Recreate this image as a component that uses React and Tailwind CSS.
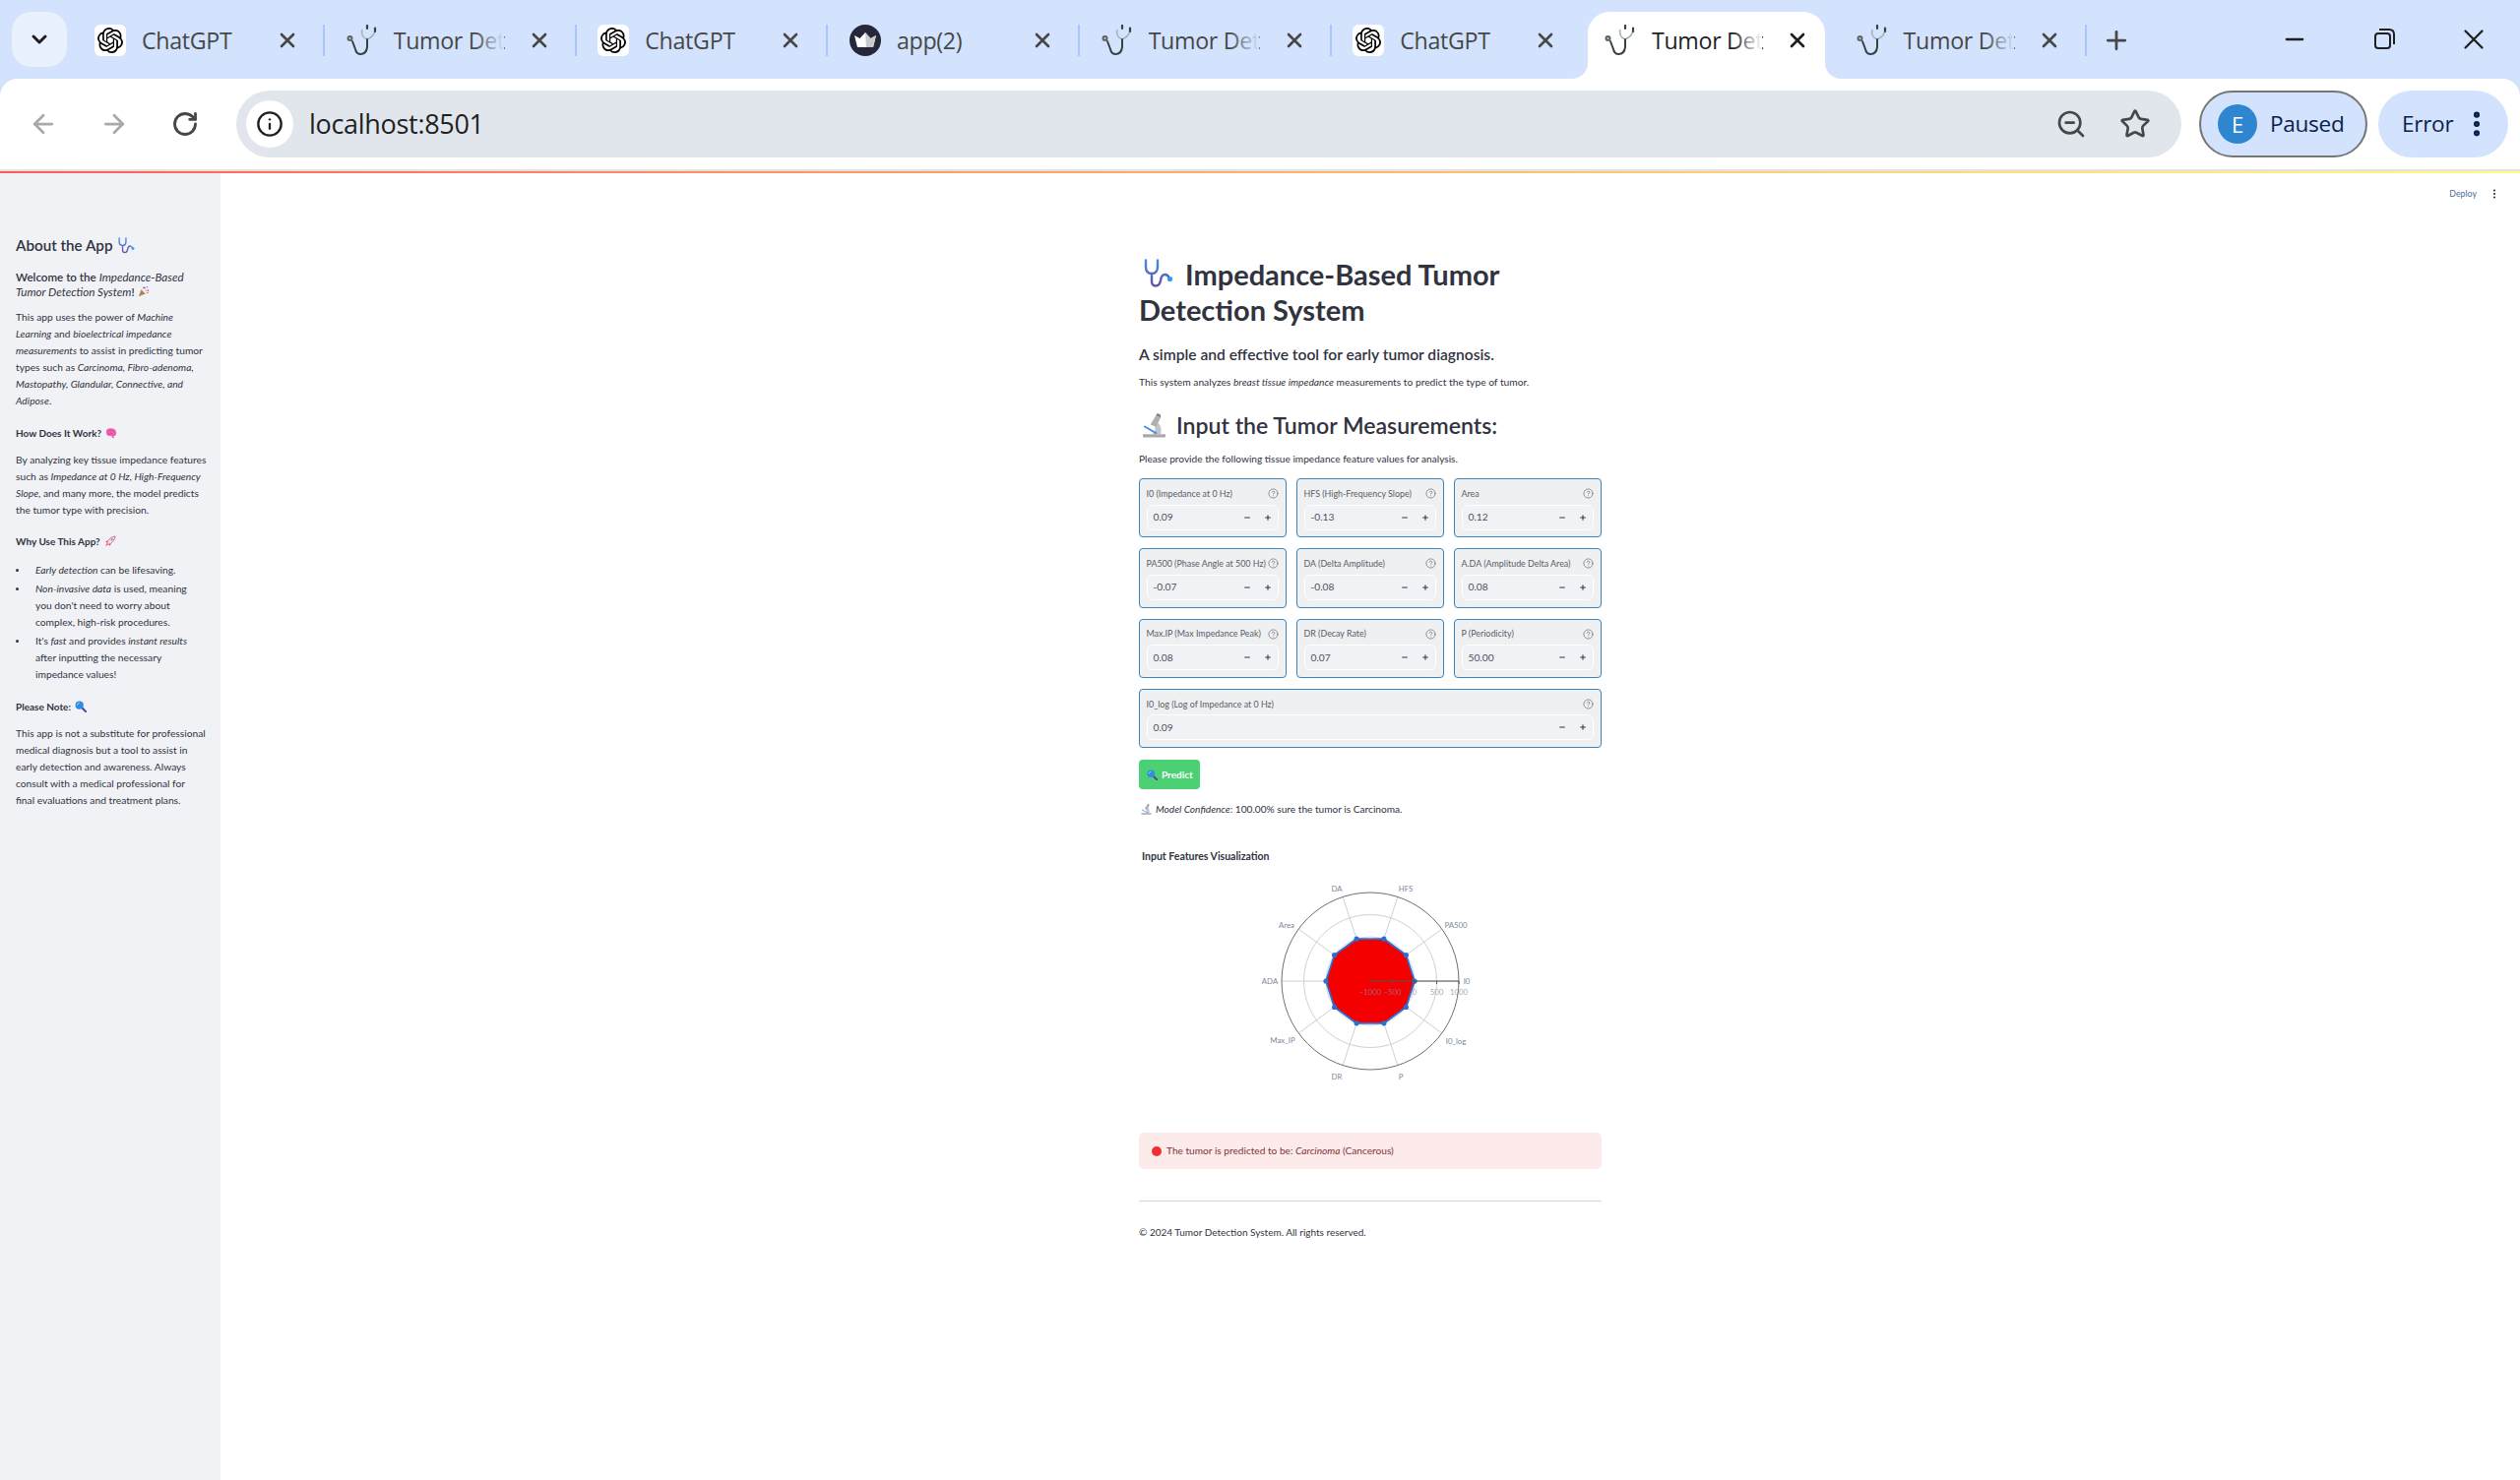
import { ArrowLeft, ArrowRight, ChevronDown, CircleHelp, EllipsisVertical, Info, Minus, Plus, RotateCw, Star, X, ZoomOut } from "lucide-react";
import { SiOpenai } from "react-icons/si";

const Stethoscope = ({ className }) => (
  <svg viewBox="0 0 30 30" className={className} fill="none">
    <defs>
      <linearGradient id="steth" x1="0" y1="0" x2="0" y2="1">
        <stop offset="0" stopColor="#3b8fe8" />
        <stop offset="1" stopColor="#6a4fa3" />
      </linearGradient>
    </defs>
    <path d="M2 1.5V8Q2 15 8 15Q14 15 14 8V1.5M8 15V23Q8 27.5 12 27.5Q16 27.5 17 22Q18 15.5 22 16Q25 16.5 26 20.5" stroke="url(#steth)" strokeWidth="2.4" strokeLinecap="round" />
    <circle cx="26.5" cy="20.5" r="2.6" fill="#2f9bf0" />
  </svg>
);

const Microscope = ({ className }) => (
  <svg viewBox="0 0 26 26" className={className} fill="none">
    <rect x="1" y="22" width="24" height="3.5" rx="0.8" fill="#a9a9ad" />
    <path d="M15 9Q22 12 20 22H11Q16 18 13 13Z" fill="#c4c4c8" />
    <path d="M9 12L15 2L20 4.5L15 14Z" fill="#b0b0b4" />
    <path d="M15 2L16.5 0L19.5 1.5L20 4.5Z" fill="#77777b" />
    <path d="M3 14L15 21" stroke="#4a90e8" strokeWidth="2" strokeLinecap="round" />
  </svg>
);

const Magnifier = ({ className }) => (
  <svg viewBox="0 0 14 14" className={className} fill="none">
    <path d="M8.5 8.5L13 13" stroke="#5b3f8f" strokeWidth="2.4" strokeLinecap="round" />
    <circle cx="5.5" cy="5.5" r="4.8" fill="#2f8de4" />
    <path d="M2.8 5Q3.2 3 5 2.8" stroke="#bfe0fb" strokeWidth="1" strokeLinecap="round" />
  </svg>
);

const Party = ({ className }) => (
  <svg viewBox="0 0 14 14" className={className}>
    <path d="M1 13L4 5L9 10Z" fill="#b5824a" />
    <circle cx="8" cy="3" r="1.1" fill="#8e5bd0" />
    <circle cx="11" cy="2" r="0.9" fill="#3b9be8" />
    <circle cx="12" cy="6" r="1" fill="#e84fa0" />
    <circle cx="9.5" cy="6.5" r="0.9" fill="#f2c230" />
    <path d="M6 4L7 1.5M10 9L13 8.5" stroke="#e84fa0" strokeWidth="0.9" />
  </svg>
);

const Brain = ({ className }) => (
  <svg viewBox="0 0 14 14" className={className}>
    <path d="M1 6Q1 1.5 6 1.5Q12 1 13 6Q13.5 10 10 10.5L10.5 13L8 12.5L7.5 10.5Q1 11 1 6Z" fill="#f25fb0" />
    <path d="M3.5 5Q6 3 7 5.5M7 4Q9.5 3 10.5 6M4 8Q7 6.5 9 8.5" stroke="#c93a8c" strokeWidth="0.7" fill="none" />
  </svg>
);

const Rocket = ({ className }) => (
  <svg viewBox="0 0 14 14" className={className}>
    <path d="M3 11L4 6.5Q7.5 1.5 13 1Q12.5 6.5 7.5 10Z" fill="#f0dde4" stroke="#e0457a" strokeWidth="0.8" />
    <path d="M1 13L3 9.5L4.5 11Z" fill="#f2703c" />
    <circle cx="9" cy="5" r="1.2" fill="#3b9be8" />
    <path d="M4 6.5L1.5 7L3 9M7.5 10L7 12.5L5 11" fill="#e0457a" />
  </svg>
);

const TabStethoscope = () => (
  <svg viewBox="12 8 32 32" className="h-[32px] w-[32px]" fill="none">
    <path d="M28 13Q26 20 33 23Q40 20 41 14" stroke="#a9b3b7" strokeWidth="1.6" />
    <path d="M33 23V31Q32 38 26.5 38Q22 38 21 33L18 25" stroke="#3a4145" strokeWidth="2" strokeLinecap="round" />
    <circle cx="15.5" cy="22" r="3" fill="#5c6468" />
    <circle cx="15.5" cy="22" r="1" fill="#c9ced0" />
    <path d="M33 9V12M41 11.5V15" stroke="#3a4145" strokeWidth="2.2" strokeLinecap="round" />
  </svg>
);

const TabIcon = ({ kind }) => {
  if (kind === "gpt")
    return (
      <span className="flex h-[32px] w-[32px] items-center justify-center rounded-[6px] bg-white text-black">
        <SiOpenai size={26} />
      </span>
    );
  if (kind === "app")
    return (
      <svg viewBox="0 0 32 32" className="h-[32px] w-[32px]">
        <circle cx="16" cy="16" r="16" fill="#262738" />
        <path d="M5 11L10.5 14L16 8L21.5 14L27 11L24 23H8Z" fill="#fff" />
        <path d="M16 8L21.5 14L27 11L24 23H17Z" fill="#c9c9cf" />
      </svg>
    );
  return <TabStethoscope />;
};

const tabs = [
  { kind: "gpt", title: "ChatGPT", sep: true },
  { kind: "med", title: "Tumor Det", sep: true, fade: true },
  { kind: "gpt", title: "ChatGPT", sep: true },
  { kind: "app", title: "app(2)", sep: true },
  { kind: "med", title: "Tumor Det", sep: true, fade: true },
  { kind: "gpt", title: "ChatGPT", sep: false },
  { kind: "med", title: "Tumor Det", sep: false, active: true, fade: true },
  { kind: "med", title: "Tumor Det", sep: true, fade: true },
];

const Tab = ({ kind, title, sep, active, fade }) => (
  <div className="relative flex h-[68px] w-[255.67px] shrink-0 items-center pb-[10px] pl-[20px]">
    {active && (
      <div className="absolute inset-y-0 left-[3px] w-[241px] rounded-t-[22px] bg-white">
        <div className="absolute bottom-0 -left-[16px] h-[16px] w-[16px] bg-white">
          <div className="h-full w-full rounded-br-[16px] bg-[#d3e3fd]" />
        </div>
        <div className="absolute -right-[16px] bottom-0 h-[16px] w-[16px] bg-white">
          <div className="h-full w-full rounded-bl-[16px] bg-[#d3e3fd]" />
        </div>
      </div>
    )}
    <div className="relative shrink-0">
      <TabIcon kind={kind} />
    </div>
    <div className={`relative ml-[16px] w-[112px] shrink-0 whitespace-nowrap text-[23.2px] leading-[32px] tracking-[-0.3px] ${active ? "text-[#1f1f1f]" : "text-[#474747]"}`}>
      {title}
      {fade && <div className={`absolute inset-y-0 right-0 w-[30px] bg-linear-to-r from-transparent ${active ? "to-white" : "to-[#d3e3fd]"}`} />}
    </div>
    <X className={`relative ml-[24px] shrink-0 ${active ? "text-[#1f1f1f]" : "text-[#474747]"}`} size={24} strokeWidth={2.6} />
    {sep && <div className="ml-[24px] h-[32px] w-[2px] shrink-0 bg-[#a8c7fa]" />}
  </div>
);

const BrowserChrome = () => (
  <div className="shrink-0 bg-[#d3e3fd] font-['Open_Sans',sans-serif]">
    <div className="flex h-[80px] items-start">
      <div className="mt-[12px] ml-[12px] flex h-[56px] w-[56px] items-center justify-center rounded-[20px] bg-[#e9f0fe]">
        <ChevronDown size={24} strokeWidth={3} className="text-[#1f1f1f]" />
      </div>
      <div className="ml-[8px] mt-[12px] flex">
        {tabs.map((t, i) => (
          <Tab key={i} {...t} />
        ))}
      </div>
      <Plus size={30} strokeWidth={2.2} className="mt-[26px] ml-[14px] text-[#474747]" />
      <div className="ml-auto flex h-[80px] items-start pt-[26px]">
        <div className="flex w-[92px] justify-center">
          <Minus size={28} strokeWidth={2} className="text-[#1f1f1f]" />
        </div>
        <div className="flex w-[88px] justify-center">
          <svg viewBox="0 0 28 28" className="h-[28px] w-[28px]" fill="none" stroke="#1f1f1f" strokeWidth="2">
            <rect x="6" y="8" width="15" height="15" rx="3" />
            <path d="M10 4H20Q25 4 25 9V19" />
          </svg>
        </div>
        <div className="flex w-[95px] justify-center">
          <X size={34} strokeWidth={1.6} className="-mt-[3px] text-[#1f1f1f]" />
        </div>
      </div>
    </div>
    <div className="flex h-[92px] items-center rounded-t-[18px] bg-white pl-[8px] pr-[12px]">
      <div className="flex w-[72px] justify-center">
        <ArrowLeft size={30} strokeWidth={2.2} className="text-[#a9a9a9]" />
      </div>
      <div className="flex w-[72px] justify-center">
        <ArrowRight size={30} strokeWidth={2.2} className="text-[#a9a9a9]" />
      </div>
      <div className="flex w-[72px] justify-center">
        <RotateCw size={28} strokeWidth={2.4} className="text-[#474747]" />
      </div>
      <div className="ml-[16px] flex h-[68px] flex-1 items-center rounded-full bg-[#e1e6ed] pl-[10px] pr-[31px]">
        <div className="flex h-[48px] w-[48px] items-center justify-center rounded-full bg-white">
          <Info size={28} strokeWidth={2} className="text-[#1f1f1f]" />
        </div>
        <span className="ml-[16px] text-[27px] leading-[36px] tracking-[-0.3px] text-[#1f1f1f]">localhost:8501</span>
        <ZoomOut size={32} strokeWidth={2} className="ml-auto text-[#474747]" />
        <Star size={32} strokeWidth={2} className="ml-[33px] text-[#474747]" />
      </div>
      <div className="ml-[18px] flex h-[68px] w-[171px] items-center rounded-full border-[2.5px] border-[#747775] bg-[#d3e3fd] pl-[17px]">
        <span className="flex h-[40px] w-[40px] items-center justify-center rounded-full bg-[#2e86d0] text-[22px] text-white">E</span>
        <span className="ml-[13px] text-[22.6px] tracking-[-0.3px] text-[#0b1f4c]">Paused</span>
      </div>
      <div className="ml-[11px] flex h-[68px] w-[132px] items-center rounded-full bg-[#d3e3fd] pl-[24px]">
        <span className="text-[22.6px] tracking-[-0.3px] text-[#0b1f4c]">Error</span>
        <EllipsisVertical size={32} strokeWidth={2.6} className="ml-[8px] text-[#0b1f4c]" />
      </div>
    </div>
    <div className="h-[2px] bg-[#e2e2e2]" />
    <div className="h-[2px] bg-linear-to-r from-[#ff5a5a] to-[#fffd80]" />
  </div>
);

const Sidebar = () => (
  <aside className="w-[224px] shrink-0 bg-[#f0f2f6] pl-[16px] pt-[63px] text-[10.25px] leading-[17px] text-[#31333f]">
    <h2 className="flex h-[20px] items-center text-[15.2px] font-semibold leading-[20px]">
      About the App
      <Stethoscope className="ml-[6px] h-[17px] w-[17px]" />
    </h2>
    <p className="mt-[15px] whitespace-nowrap text-[11.6px] font-semibold leading-[15px]">
      Welcome to the <em className="font-normal">Impedance-Based</em>
      <br />
      <em className="font-normal">Tumor Detection System</em>! <Party className="inline h-[12px] w-[12px] align-[-1px]" />
    </p>
    <p className="mt-[10px] whitespace-nowrap">
      This app uses the power of <em>Machine</em>
      <br />
      <em>Learning</em> and <em>bioelectrical impedance</em>
      <br />
      <em>measurements</em> to assist in predicting tumor
      <br />
      types such as <em>Carcinoma, Fibro-adenoma,</em>
      <br />
      <em>Mastopathy, Glandular, Connective, and</em>
      <br />
      <em>Adipose</em>.
    </p>
    <h3 className="mt-[16px] flex h-[16px] items-center text-[10px] font-bold leading-[16px]">
      How Does It Work?
      <Brain className="ml-[4px] h-[12px] w-[12px]" />
    </h3>
    <p className="mt-[11px] whitespace-nowrap">
      By analyzing key tissue impedance features
      <br />
      such as <em>Impedance at 0 Hz, High-Frequency</em>
      <br />
      <em>Slope</em>, and many more, the model predicts
      <br />
      the tumor type with precision.
    </p>
    <h3 className="mt-[15px] flex h-[16px] items-center text-[10px] font-bold leading-[16px]">
      Why Use This App?
      <Rocket className="ml-[4px] h-[12px] w-[12px]" />
    </h3>
    <ul className="mt-[13px] flex list-none flex-col gap-[2px] whitespace-nowrap">
      <li className="flex">
        <span className="mr-[17px] mt-[7px] h-[3px] w-[3px] shrink-0 rounded-full bg-[#31333f]" />
        <span>
          <em>Early detection</em> can be lifesaving.
        </span>
      </li>
      <li className="flex">
        <span className="mr-[17px] mt-[7px] h-[3px] w-[3px] shrink-0 rounded-full bg-[#31333f]" />
        <span>
          <em>Non-invasive data</em> is used, meaning
          <br />
          you don't need to worry about
          <br />
          complex, high-risk procedures.
        </span>
      </li>
      <li className="flex">
        <span className="mr-[17px] mt-[7px] h-[3px] w-[3px] shrink-0 rounded-full bg-[#31333f]" />
        <span>
          It's <em>fast</em> and provides <em>instant results</em>
          <br />
          after inputting the necessary
          <br />
          impedance values!
        </span>
      </li>
    </ul>
    <h3 className="mt-[16px] flex h-[16px] items-center text-[10px] font-bold leading-[16px]">
      Please Note:
      <Magnifier className="ml-[4px] h-[12px] w-[12px]" />
    </h3>
    <p className="mt-[11px] whitespace-nowrap">
      This app is not a substitute for professional
      <br />
      medical diagnosis but a tool to assist in
      <br />
      early detection and awareness. Always
      <br />
      consult with a medical professional for
      <br />
      final evaluations and treatment plans.
    </p>
  </aside>
);

const fields = [
  { label: "I0 (Impedance at 0 Hz)", value: "0.09" },
  { label: "HFS (High-Frequency Slope)", value: "-0.13" },
  { label: "Area", value: "0.12" },
  { label: "PA500 (Phase Angle at 500 Hz)", value: "-0.07" },
  { label: "DA (Delta Amplitude)", value: "-0.08" },
  { label: "A.DA (Amplitude Delta Area)", value: "0.08" },
  { label: "Max.IP (Max Impedance Peak)", value: "0.08" },
  { label: "DR (Decay Rate)", value: "0.07" },
  { label: "P (Periodicity)", value: "50.00" },
  { label: "I0_log (Log of Impedance at 0 Hz)", value: "0.09", wide: true },
];

const NumberField = ({ label, value, wide }) => (
  <div className={`h-[60.33px] rounded-[4px] border-[1.5px] border-[#3a84c0] bg-[#eef0f2] pl-[6.5px] pr-[7px] pt-[6.5px] ${wide ? "col-span-3" : ""}`}>
    <div className="flex h-[16px] items-center justify-between">
      <span className="whitespace-nowrap text-[8.9px] text-[#5a5c68]">{label}</span>
      <CircleHelp size={11} strokeWidth={1.6} className="shrink-0 text-[#6f6f76]" />
    </div>
    <div className="mt-[3px] flex h-[26px] items-center rounded-[6px] border border-white bg-[#f0f2f6] pl-[6px]">
      <span className="text-[10.2px] text-[#4f515c]">{value}</span>
      <span className="ml-auto flex w-[21px] justify-center">
        <Minus size={8} strokeWidth={3.2} className="text-[#31333f]" />
      </span>
      <span className="flex w-[21px] justify-center">
        <Plus size={8} strokeWidth={3.2} className="text-[#31333f]" />
      </span>
    </div>
  </div>
);

const axes = [
  { name: "I0", x: 98, y: 0 },
  { name: "PA500", x: 87, y: -57 },
  { name: "HFS", x: 36, y: -94 },
  { name: "DA", x: -34, y: -94 },
  { name: "Area", x: -85, y: -57 },
  { name: "ADA", x: -102, y: 0 },
  { name: "Max_IP", x: -89, y: 60 },
  { name: "DR", x: -34, y: 97 },
  { name: "P", x: 31, y: 97 },
  { name: "I0_log", x: 87, y: 61 },
];

const polar = (r, i) => {
  const a = (i * 36 * Math.PI) / 180;
  return [r * Math.cos(a), -r * Math.sin(a)];
};

const RadarChart = () => {
  const pts = axes.map((_, i) => polar(45, i));
  const poly = pts.map((p) => p.join(",")).join(" ");
  return (
    <svg viewBox="0 0 470 240" className="h-[240px] w-[470px]">
      <g transform="translate(235 119)" fontFamily="Lato, sans-serif" fontSize="7.8">
        {axes.map((a, i) => {
          const [x, y] = polar(90, i);
          return <line key={a.name} x1="0" y1="0" x2={x} y2={y} stroke="#cfcfcf" strokeWidth="1" />;
        })}
        <circle r="22.5" fill="none" stroke="#d5d5d5" />
        <circle r="45" fill="none" stroke="#d5d5d5" />
        <circle r="67.5" fill="none" stroke="#d0d0d0" />
        <circle r="90" fill="none" stroke="#6f6f6f" />
        <polygon points={poly} fill="#f50000" stroke="#2a6fd0" strokeWidth="1.8" />
        {pts.map((p, i) => (
          <circle key={i} cx={p[0]} cy={p[1]} r="2.6" fill="#2a6fd0" />
        ))}
        <line x1="0" y1="0" x2="90" y2="0" stroke="#555" strokeWidth="1" />
        {[0, 22.5, 45, 67.5, 90].map((x) => (
          <line key={x} x1={x} y1="0" x2={x} y2="3" stroke="#555" />
        ))}
        {[
          ["−1000", 0],
          ["−500", 22.5],
          ["0", 45],
          ["500", 67.5],
          ["1000", 90],
        ].map(([t, x]) => (
          <text key={t} x={x} y="14" textAnchor="middle" fill="#7d87a0" fillOpacity="0.75">
            {t}
          </text>
        ))}
        {axes.map((a) => (
          <text key={a.name} x={a.x} y={a.y + 3} textAnchor="middle" fill="#7d87a0">
            {a.name}
          </text>
        ))}
      </g>
    </svg>
  );
};

const MainPanel = () => (
  <main className="relative min-w-0 flex-1 bg-white text-[#31333f]">
    <div className="absolute right-[20px] top-[14px] flex items-center">
      <span className="text-[8.8px] text-[#4f6a9a]">Deploy</span>
      <EllipsisVertical size={12} strokeWidth={2.4} className="ml-[12px] text-[#31333f]" />
    </div>
    <div className="mx-auto w-[470px] pt-[85px]">
      <h1 className="text-[29px] font-bold leading-[36px]">
        <Stethoscope className="mr-[12px] ml-[5px] inline h-[30px] w-[30px] align-[-3px]" />
        Impedance-Based Tumor
        <br />
        Detection System
      </h1>
      <p className="mt-[16px] text-[15.6px] font-semibold leading-[22px]">A simple and effective tool for early tumor diagnosis.</p>
      <p className="mt-[9px] text-[10.25px] leading-[16px]">
        This system analyzes <em>breast tissue impedance</em> measurements to predict the type of tumor.
      </p>
      <h2 className="mt-[21px] flex h-[30px] items-center text-[23.1px] font-semibold leading-[30px]">
        <Microscope className="mr-[10px] ml-[3px] h-[25px] w-[25px]" />
        Input the Tumor Measurements:
      </h2>
      <p className="mt-[11px] text-[10.15px] leading-[16px]">Please provide the following tissue impedance feature values for analysis.</p>
      <div className="mt-[12px] grid grid-cols-3 gap-x-[10px] gap-y-[11px]">
        {fields.map((f) => (
          <NumberField key={f.label} {...f} />
        ))}
      </div>
      <button className="mt-[12px] flex h-[30px] w-[62px] items-center rounded-[4px] bg-[#4bd074] pl-[8px] text-[10px] font-bold text-white">
        <Magnifier className="mr-[4px] h-[11px] w-[11px]" />
        Predict
      </button>
      <p className="mt-[12px] flex h-[16px] items-center pl-[2px] text-[10.15px] leading-[16px]">
        <Microscope className="mr-[4px] h-[11px] w-[11px]" />
        <span>
          <em>Model Confidence</em>: 100.00% sure the tumor is Carcinoma.
        </span>
      </p>
      <h3 className="mt-[32px] pl-[3px] text-[10.5px] font-bold leading-[16px]">Input Features Visualization</h3>
      <RadarChart />
      <div className="mt-[33px] flex h-[37px] items-center rounded-[5px] bg-[#fdeaea] pl-[13px] text-[10.15px] text-[#7d353b]">
        <span className="mr-[5px] h-[10px] w-[10px] rounded-full bg-[#f03030]" />
        <span>
          The tumor is predicted to be: <em>Carcinoma</em> (Cancerous)
        </span>
      </div>
      <div className="mt-[32px] h-[1px] bg-[#d5d5d8]" />
      <p className="mt-[23px] text-[10px] leading-[16px]">© 2024 Tumor Detection System. All rights reserved.</p>
    </div>
  </main>
);

export default function App() {
  return (
    <div className="flex h-screen flex-col overflow-hidden bg-white font-['Lato',sans-serif]">
      <BrowserChrome />
      <div className="flex min-h-0 flex-1">
        <Sidebar />
        <MainPanel />
      </div>
    </div>
  );
}
